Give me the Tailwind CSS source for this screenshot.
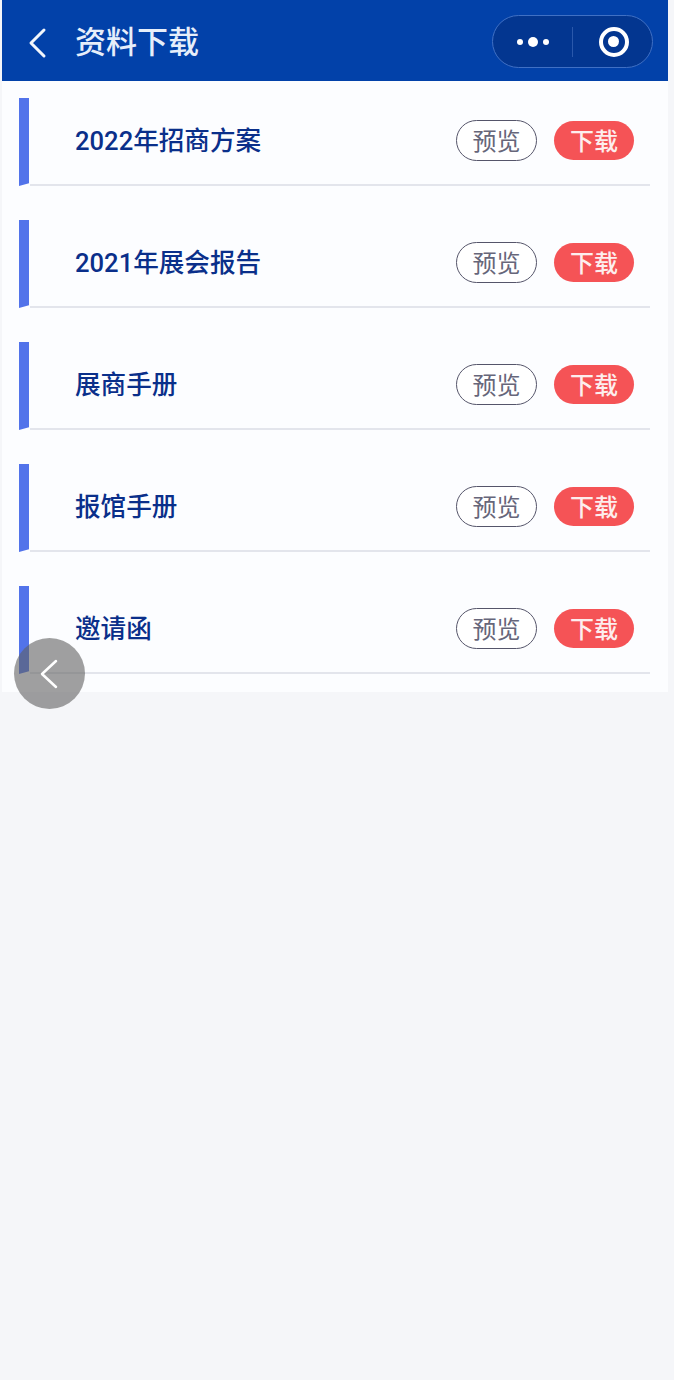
<!DOCTYPE html>
<html lang="zh-CN">

<head>
    <meta charset="utf-8">
    <meta name="viewport" content="width=device-width, initial-scale=1">
    <title>资料下载</title>
    <script src="https://cdn.jsdelivr.net/npm/@tailwindcss/browser@4"></script>
</head>

<body class="relative w-[674px] h-[1380px] overflow-hidden bg-[#f5f6f9] font-['Roboto','Noto_Sans_CJK_SC',sans-serif]">
    <div class="ml-[2px] w-[666px] bg-[#fcfdff]">
        <!-- title bar -->
        <header class="flex items-center h-[81px] pt-[2px] bg-[#0241a9]">
            <svg class="ml-[26px] mt-[2px] w-[20px] h-[32px]" viewBox="0 0 20 32" fill="none" stroke="#f2f6fc" stroke-width="3" stroke-linecap="round" stroke-linejoin="round">
                <path d="M16 3 3 16l13 13"/>
            </svg>
            <h1 class="ml-[27px] mt-[2px] text-[31px] leading-none font-medium text-[#e6eefa]">资料下载</h1>

            <div class="ml-auto mr-[15px] flex items-center w-[161px] h-[53px] rounded-full bg-[#033690] border border-[#4070c4]">
                <div class="flex items-center justify-center gap-[5px] w-[79px]">
                    <span class="w-[6px] h-[6px] rounded-full bg-white"></span>
                    <span class="w-[10px] h-[10px] rounded-full bg-white"></span>
                    <span class="w-[6px] h-[6px] rounded-full bg-white"></span>
                </div>
                <span class="w-px h-[30px] bg-[#2a58ab]"></span>
                <div class="flex items-center justify-center flex-1 pl-[2px]">
                    <span class="flex items-center justify-center w-[30px] h-[30px] rounded-full border-[4px] border-white">
                        <span class="w-[11px] h-[11px] rounded-full bg-white"></span>
                    </span>
                </div>
            </div>
        </header>

        <!-- file list -->
        <ul class="flex flex-col gap-[34px] pt-[17px] pb-[18px]">
            <li class="flex h-[88px] ml-[17px] mr-[18px]">
                <span class="w-[10px] bg-[#5273ea] [clip-path:polygon(0_0,100%_0,100%_97%,0_100%)]"></span>
                <div class="flex flex-1 items-center ml-px border-b-2 border-[#e3e5ec]">
                    <span class="ml-[45px] mt-[1px] text-[25.6px] leading-none font-medium text-[#0a2f8a]">2022年招商方案</span>
                    <span class="ml-auto mb-[2px] flex items-center justify-center w-[81px] h-[41px] pt-[4px] rounded-full border border-[#55556a] bg-white text-[24px] text-[#66667a]">预览</span>
                    <span class="ml-[17px] mr-[16px] mb-[2px] flex items-center justify-center w-[80px] h-[39px] pt-[4px] rounded-full bg-[#f55356] text-[24px] font-medium text-[#fdeeee]">下载</span>
                </div>
            </li>
            <li class="flex h-[88px] ml-[17px] mr-[18px]">
                <span class="w-[10px] bg-[#5273ea] [clip-path:polygon(0_0,100%_0,100%_97%,0_100%)]"></span>
                <div class="flex flex-1 items-center ml-px border-b-2 border-[#e3e5ec]">
                    <span class="ml-[45px] mt-[1px] text-[25.6px] leading-none font-medium text-[#0a2f8a]">2021年展会报告</span>
                    <span class="ml-auto mb-[2px] flex items-center justify-center w-[81px] h-[41px] pt-[4px] rounded-full border border-[#55556a] bg-white text-[24px] text-[#66667a]">预览</span>
                    <span class="ml-[17px] mr-[16px] mb-[2px] flex items-center justify-center w-[80px] h-[39px] pt-[4px] rounded-full bg-[#f55356] text-[24px] font-medium text-[#fdeeee]">下载</span>
                </div>
            </li>
            <li class="flex h-[88px] ml-[17px] mr-[18px]">
                <span class="w-[10px] bg-[#5273ea] [clip-path:polygon(0_0,100%_0,100%_97%,0_100%)]"></span>
                <div class="flex flex-1 items-center ml-px border-b-2 border-[#e3e5ec]">
                    <span class="ml-[45px] mt-[1px] text-[25.6px] leading-none font-medium text-[#0a2f8a]">展商手册</span>
                    <span class="ml-auto mb-[2px] flex items-center justify-center w-[81px] h-[41px] pt-[4px] rounded-full border border-[#55556a] bg-white text-[24px] text-[#66667a]">预览</span>
                    <span class="ml-[17px] mr-[16px] mb-[2px] flex items-center justify-center w-[80px] h-[39px] pt-[4px] rounded-full bg-[#f55356] text-[24px] font-medium text-[#fdeeee]">下载</span>
                </div>
            </li>
            <li class="flex h-[88px] ml-[17px] mr-[18px]">
                <span class="w-[10px] bg-[#5273ea] [clip-path:polygon(0_0,100%_0,100%_97%,0_100%)]"></span>
                <div class="flex flex-1 items-center ml-px border-b-2 border-[#e3e5ec]">
                    <span class="ml-[45px] mt-[1px] text-[25.6px] leading-none font-medium text-[#0a2f8a]">报馆手册</span>
                    <span class="ml-auto mb-[2px] flex items-center justify-center w-[81px] h-[41px] pt-[4px] rounded-full border border-[#55556a] bg-white text-[24px] text-[#66667a]">预览</span>
                    <span class="ml-[17px] mr-[16px] mb-[2px] flex items-center justify-center w-[80px] h-[39px] pt-[4px] rounded-full bg-[#f55356] text-[24px] font-medium text-[#fdeeee]">下载</span>
                </div>
            </li>
            <li class="flex h-[88px] ml-[17px] mr-[18px]">
                <span class="w-[10px] bg-[#5273ea] [clip-path:polygon(0_0,100%_0,100%_97%,0_100%)]"></span>
                <div class="flex flex-1 items-center ml-px border-b-2 border-[#e3e5ec]">
                    <span class="ml-[45px] mt-[1px] text-[25.6px] leading-none font-medium text-[#0a2f8a]">邀请函</span>
                    <span class="ml-auto mb-[2px] flex items-center justify-center w-[81px] h-[41px] pt-[4px] rounded-full border border-[#55556a] bg-white text-[24px] text-[#66667a]">预览</span>
                    <span class="ml-[17px] mr-[16px] mb-[2px] flex items-center justify-center w-[80px] h-[39px] pt-[4px] rounded-full bg-[#f55356] text-[24px] font-medium text-[#fdeeee]">下载</span>
                </div>
            </li>
        </ul>
    </div>

    <!-- floating back button -->
    <div class="absolute left-[14px] top-[638px] flex items-center justify-center w-[71px] h-[71px] rounded-full bg-[#606060]/60">
        <svg class="w-[20px] h-[32px] mr-[2px]" viewBox="0 0 20 32" fill="none" stroke="#fff" stroke-width="2.5" stroke-linecap="round" stroke-linejoin="round">
            <path d="M17 3 3 16l14 13"/>
        </svg>
    </div>
</body>

</html>
